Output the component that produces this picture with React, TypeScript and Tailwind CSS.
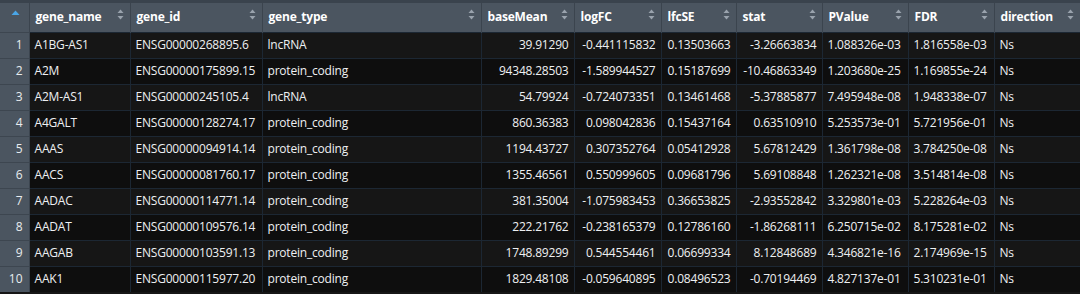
import React from 'react';

type Row = [string, string, string, string, string, string, string, string, string, string];

const columns = [
  { key: 'gene_name', width: 'w-[101px]', align: 'left' },
  { key: 'gene_id', width: 'w-[132px]', align: 'left' },
  { key: 'gene_type', width: 'w-[219px]', align: 'left' },
  { key: 'baseMean', width: 'w-[93px]', align: 'right' },
  { key: 'logFC', width: 'w-[87px]', align: 'right' },
  { key: 'lfcSE', width: 'w-[75px]', align: 'right' },
  { key: 'stat', width: 'w-[86px]', align: 'right' },
  { key: 'PValue', width: 'w-[86px]', align: 'left' },
  { key: 'FDR', width: 'w-[86px]', align: 'left' },
  { key: 'direction', width: 'w-[86px]', align: 'left' },
];

const rows: Row[] = [
  ['A1BG-AS1', 'ENSG00000268895.6', 'lncRNA', '39.91290', '-0.441115832', '0.13503663', '-3.26663834', '1.088326e-03', '1.816558e-03', 'Ns'],
  ['A2M', 'ENSG00000175899.15', 'protein_coding', '94348.28503', '-1.589944527', '0.15187699', '-10.46863349', '1.203680e-25', '1.169855e-24', 'Ns'],
  ['A2M-AS1', 'ENSG00000245105.4', 'lncRNA', '54.79924', '-0.724073351', '0.13461468', '-5.37885877', '7.495948e-08', '1.948338e-07', 'Ns'],
  ['A4GALT', 'ENSG00000128274.17', 'protein_coding', '860.36383', '0.098042836', '0.15437164', '0.63510910', '5.253573e-01', '5.721956e-01', 'Ns'],
  ['AAAS', 'ENSG00000094914.14', 'protein_coding', '1194.43727', '0.307352764', '0.05412928', '5.67812429', '1.361798e-08', '3.784250e-08', 'Ns'],
  ['AACS', 'ENSG00000081760.17', 'protein_coding', '1355.46561', '0.550999605', '0.09681796', '5.69108848', '1.262321e-08', '3.514814e-08', 'Ns'],
  ['AADAC', 'ENSG00000114771.14', 'protein_coding', '381.35004', '-1.075983453', '0.36653825', '-2.93552842', '3.329801e-03', '5.228264e-03', 'Ns'],
  ['AADAT', 'ENSG00000109576.14', 'protein_coding', '222.21762', '-0.238165379', '0.12786160', '-1.86268111', '6.250715e-02', '8.175281e-02', 'Ns'],
  ['AAGAB', 'ENSG00000103591.13', 'protein_coding', '1748.89299', '0.544554461', '0.06699334', '8.12848689', '4.346821e-16', '2.174969e-15', 'Ns'],
  ['AAK1', 'ENSG00000115977.20', 'protein_coding', '1829.48108', '-0.059640895', '0.08496523', '-0.70194469', '4.827137e-01', '5.310231e-01', 'Ns'],
];

const SortIcon: React.FC = () => (
  <svg className="absolute right-[6px] top-[6px]" width="7" height="11" viewBox="0 0 7 11">
    <path d="M3.5 0.5 L6.5 4 L0.5 4 Z" fill="#9aa3ad" />
    <path d="M3.5 10.5 L6.5 7 L0.5 7 Z" fill="#9aa3ad" />
  </svg>
);

export default function App() {
  return (
    <div className="w-[1080px] h-[294px] bg-[#161616] overflow-hidden font-['Open_Sans','Noto_Sans',sans-serif] text-[12px]">
      <div className="h-[3px] bg-[#3a434d]" />
      <table className="table-fixed border-collapse w-[1080px]">
        <thead>
          <tr className="h-[29px] bg-[#4b5560] text-white">
            <th className="w-[29px] relative border-r border-[#3b444e] p-0">
              <svg className="absolute right-[9px] top-[7px]" width="9" height="6" viewBox="0 0 9 6">
                <path d="M4.5 0.5 L8.5 5 L0.5 5 Z" fill="#4aa5e6" />
              </svg>
            </th>
            {columns.map((c) => (
              <th
                key={c.key}
                className={`${c.width} relative border-r border-[#3b444e] last:border-r-0 pl-[6px] pr-[14px] text-left font-bold tracking-[-0.2px]`}
              >
                {c.key}
                <SortIcon />
              </th>
            ))}
          </tr>
        </thead>
        <tbody>
          {rows.map((r, i) => (
            <tr key={i} className={`h-[26px] border-t border-[#1c2733] ${i % 2 === 0 ? 'bg-[#161616]' : 'bg-[#0e0e0e]'}`}>
              <td className="bg-[#4b5560] text-[#e8ecef] text-right pr-[6px] border-r border-[#3b444e] border-t border-t-[#3d4650]">
                {i + 1}
              </td>
              {r.map((v, j) => (
                <td
                  key={j}
                  className={`border-r border-[#1c2733] last:border-r-0 px-[5px] text-[#eef0f2] whitespace-nowrap overflow-hidden tracking-[-0.2px] ${columns[j].align === 'right' ? 'text-right' : 'text-left'}`}
                >
                  {v}
                </td>
              ))}
            </tr>
          ))}
        </tbody>
      </table>
    </div>
  );
}
